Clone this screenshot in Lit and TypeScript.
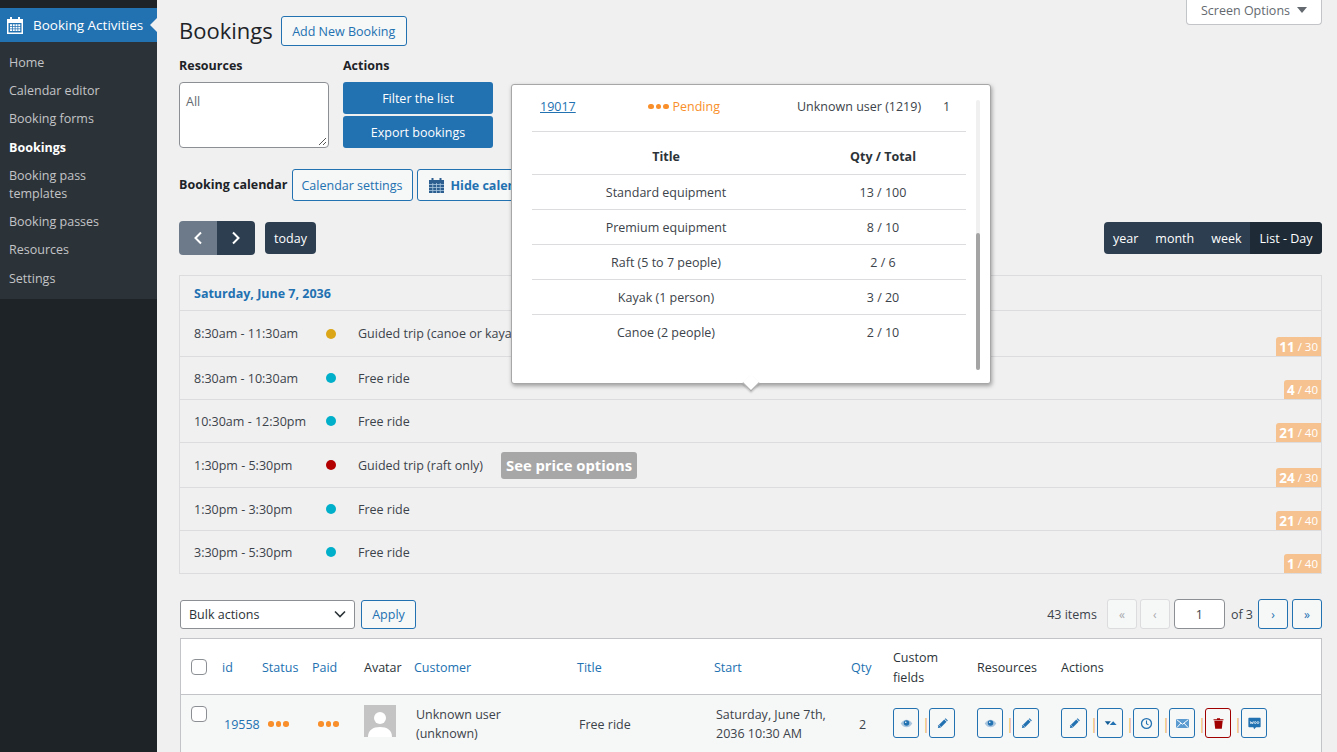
import { LitElement, html, css, svg } from "lit";
import { customElement } from "lit/decorators.js";

const MENU = ["Home", "Calendar editor", "Booking forms", "Bookings", "Booking pass templates", "Booking passes", "Resources", "Settings"];

const EVENTS = [
  { time: "8:30am - 11:30am", dot: "#dba617", title: "Guided trip (canoe or kayak)", qty: 11, total: 30, rowClass: "row-46" },
  { time: "8:30am - 10:30am", dot: "#00afc9", title: "Free ride", qty: 4, total: 40, rowClass: "" },
  { time: "10:30am - 12:30pm", dot: "#00afc9", title: "Free ride", qty: 21, total: 40, rowClass: "" },
  { time: "1:30pm - 5:30pm", dot: "#b30000", title: "Guided trip (raft only)", qty: 24, total: 30, rowClass: "row-45", tip: "See price options" },
  { time: "1:30pm - 3:30pm", dot: "#00afc9", title: "Free ride", qty: 21, total: 40, rowClass: "" },
  { time: "3:30pm - 5:30pm", dot: "#00afc9", title: "Free ride", qty: 1, total: 40, rowClass: "" },
];

const RESOURCES = [
  ["Standard equipment", "13 / 100"],
  ["Premium equipment", "8 / 10"],
  ["Raft (5 to 7 people)", "2 / 6"],
  ["Kayak (1 person)", "3 / 20"],
  ["Canoe (2 people)", "2 / 10"],
];

const CELL_X = [3, 5.75, 8.5, 11.25];
const CELL_Y = [8.25, 10.75, 13.25];

const menuCalendar = html`<svg width="16" height="18" viewBox="0 0 16 18" fill="#fff">
  <path fill-rule="evenodd" d="M0 3h3V1h2v2h6V1h2v2h3v15H0zM1.500 7v9.500h13V7z"/>
  ${CELL_Y.map((y) => CELL_X.map((x) => svg`<rect x=${x} y=${y} width="2" height="1.750"/>`))}
</svg>`;

const buttonCalendar = html`<svg width="15" height="16" viewBox="0 0 15 16">
  <path d="M0 3h2.500V1h2v2h6V1h2v2H15v13H0z" fill="#2c5f8f"/>
  <path d="M0 7.500h15M0 10.500h15M0 13.500h15M3.750 6v10M7.500 6v10M11.250 6v10" stroke="#a9c6de" stroke-width=".8"/>
</svg>`;

const ICONS: Record<string, unknown> = {
  eye: svg`<path d="M1 8.500C3 5 6 3.500 8.500 3.500S14 5 16 8.500C14 12 11 13.500 8.500 13.500S3 12 1 8.500z" fill="#a9c6de"/><circle cx="8.500" cy="8" r="3.600" fill="#2271b1"/><circle cx="7.500" cy="6.800" r="1" fill="#fff"/>`,
  pencil: svg`<path d="M2.500 14.500l.8-3.800 7.500-7.500 3 3-7.500 7.500z" fill="#2271b1"/><path d="M11.500 2.500l1-1 3 3-1 1z" fill="#2271b1"/><path d="M4 10.500l2.500 2.500" stroke="#cfe0ee" stroke-width=".8"/>`,
  arrows: svg`<path d="M1 5.500h8l-4 5z" fill="#135e96"/><path d="M12 5.500l4.500 5h-9z" fill="#2271b1"/>`,
  clock: svg`<circle cx="8.500" cy="8.500" r="6.500" fill="none" stroke="#2271b1" stroke-width="1.700"/><path d="M8.500 4.500v4.300l2.600 1.500" fill="none" stroke="#2271b1" stroke-width="1.400"/>`,
  mail: svg`<rect x="0" y="2.500" width="17" height="12" rx="1" fill="#5b9bd0"/><path d="M1 3.500l7.500 6 7.500-6M1 14l5.500-6M16 14l-5.500-6" fill="none" stroke="#fff" stroke-width="1.300"/>`,
  trash: svg`<path d="M3 5h11l-1.200 10.500H4.200z" fill="#a00000"/><path d="M2 3h13v1.300H2zM6.500 1.500h4V3h-4z" fill="#a00000"/>`,
  woo: svg`<path d="M1.500 1h14a1 1 0 0 1 1 1v10.500a1 1 0 0 1-1 1h-5L8 16l-1-2.500H1.500a1 1 0 0 1-1-1V2a1 1 0 0 1 1-1z" fill="#2271b1"/><path d="M3 5.500l.8 3.500 1.200-2.500 1.200 2.500.8-3.500" fill="none" stroke="#fff" stroke-width=".9"/><circle cx="9.500" cy="7.300" r="1.300" fill="none" stroke="#fff" stroke-width=".9"/><circle cx="13" cy="7.300" r="1.300" fill="none" stroke="#fff" stroke-width=".9"/>`,
};

const iconButton = (name: string) => html`<span class="icon-btn ${name === "trash" ? "danger" : ""}">
  <svg width="13" height="13" viewBox="0 0 17 17">${ICONS[name]}</svg>
</span>`;

const iconGroup = (names: string[]) => html`<div class="icon-group">
  ${names.map((n, i) => html`${i > 0 ? html`<span class="sep">|</span>` : ""}${iconButton(n)}`)}
</div>`;

const dots = html`<span class="dots"><i></i><i></i><i></i></span>`;

@customElement("app-root")
export class AppRoot extends LitElement {
  static styles = css`
    :host {
      display: flex;
      height: 752px;
      overflow: hidden;
      background: #f0f0f1;
      font-family: "Open Sans", "Noto Sans", sans-serif;
      font-size: 12.500px;
      color: #3c434a;
    }
    * {
      box-sizing: border-box;
    }

    /* admin menu */
    .sidebar {
      width: 157px;
      flex: none;
      background: #1d2327;
      padding-top: 8px;
    }
    .menu-head {
      position: relative;
      display: flex;
      align-items: center;
      gap: 10px;
      height: 34px;
      padding-left: 7px;
      background: #2271b1;
      color: #fff;
      font-size: 13.500px;
      white-space: nowrap;
    }
    .menu-head::after {
      content: "";
      position: absolute;
      right: 0;
      top: 10px;
      border: 7.500px solid transparent;
      border-right-color: #f0f0f1;
      border-left-width: 0;
    }
    .submenu {
      background: #2c3338;
      padding: 7px 0 6px;
    }
    .submenu div {
      padding: 5px 30px 5px 9px;
      line-height: 18.200px;
      color: #c3c4c7;
    }
    .submenu .current {
      color: #fff;
      font-weight: 700;
    }

    /* main column */
    .main {
      position: relative;
      flex: 1;
      min-width: 0;
      padding: 0 15px 0 22px;
    }
    .screen-tab {
      position: absolute;
      top: 0;
      right: 15px;
      width: 136px;
      height: 25px;
      padding-bottom: 4px;
      display: flex;
      align-items: center;
      justify-content: center;
      gap: 7px;
      background: #fff;
      border: 1px solid #c3c4c7;
      border-top: 0;
      border-radius: 0 0 4px 4px;
      color: #646970;
    }
    .caret {
      border: 5px solid transparent;
      border-top: 6px solid #646970;
      border-bottom: 0;
    }
    .title-row {
      display: flex;
      align-items: center;
      gap: 8px;
      height: 30px;
      margin-top: 16px;
    }
    h1 {
      margin: 0 0 2px;
      font-size: 22px;
      font-weight: 400;
      color: #1d2327;
    }
    .btn {
      display: inline-flex;
      align-items: center;
      justify-content: center;
      background: #f6f7f7;
      border: 1px solid #2271b1;
      border-radius: 3px;
      color: #2271b1;
      white-space: nowrap;
    }
    .add-new {
      width: 126px;
      height: 30px;
    }
    .filters {
      display: flex;
      gap: 14px;
      margin-top: 11px;
    }
    .field-label {
      display: block;
      height: 25px;
      line-height: 18px;
      font-weight: 700;
      color: #1d2327;
      font-size: 12.500px;
    }
    .res-box {
      position: relative;
      width: 150px;
      height: 66px;
      padding: 10px 6px;
      background: #fff;
      border: 1px solid #8c8f94;
      border-radius: 4px;
      color: #646970;
    }
    .grip {
      position: absolute;
      right: 1px;
      bottom: 1px;
    }
    .action-stack {
      display: flex;
      flex-direction: column;
      gap: 2px;
    }
    .primary {
      width: 150px;
      height: 32px;
      background: #2271b1;
      color: #fff;
      border-radius: 3px;
      display: flex;
      align-items: center;
      justify-content: center;
    }
    .cal-row {
      display: flex;
      align-items: center;
      gap: 4px;
      height: 32px;
      margin-top: 21px;
    }
    .cal-row .field-label {
      height: auto;
      margin-right: 0;
    }
    .cal-settings {
      width: 121px;
      height: 32px;
    }
    .hide-cal {
      width: 170px;
      height: 32px;
      gap: 7px;
      font-weight: 700;
      justify-content: flex-start;
      padding-left: 11px;
    }
    .toolbar {
      display: flex;
      align-items: center;
      justify-content: space-between;
      height: 34px;
      margin-top: 20px;
    }
    .toolbar-left {
      display: flex;
      align-items: center;
      gap: 10px;
    }
    .nav-pair {
      display: flex;
    }
    .nav-btn {
      width: 38px;
      height: 34px;
      display: flex;
      align-items: center;
      justify-content: center;
      background: #2c3e50;
      border-radius: 0 4px 4px 0;
    }
    .nav-btn.off {
      background: #6c7a89;
      border-radius: 4px 0 0 4px;
    }
    .dark {
      height: 32px;
      display: flex;
      align-items: center;
      background: #2c3e50;
      border-radius: 4px;
      color: #fff;
    }
    .today {
      width: 51px;
      justify-content: center;
    }
    .views {
      overflow: hidden;
    }
    .views span {
      height: 32px;
      padding: 0 8.500px;
      display: flex;
      align-items: center;
      justify-content: center;
    }
    .views .on {
      background: #1e2b37;
      width: 72px;
      padding: 0;
    }

    /* day list */
    .day-list {
      margin-top: 20px;
      border: 1px solid #dcdcde;
      border-bottom: 0;
    }
    .day-head {
      height: 35px;
      display: flex;
      align-items: center;
      padding-left: 14px;
      font-weight: 700;
      color: #2271b1;
      border-bottom: 1px solid #dcdcde;
    }
    .ev-row {
      display: flex;
      height: 43px;
      border-bottom: 1px solid #dcdcde;
    }
    .row-46 {
      height: 46px;
    }
    .row-45 {
      height: 45px;
    }
    .ev-main {
      flex: 1;
      display: flex;
      align-items: center;
      padding-left: 14px;
      white-space: nowrap;
    }
    .ev-time {
      width: 132px;
    }
    .ev-dot {
      width: 10px;
      height: 10px;
      border-radius: 50%;
      margin-right: 22px;
    }
    .tip {
      margin-left: 18px;
      padding: 0 5px;
      height: 27px;
      display: flex;
      align-items: center;
      background: #a7a7a7;
      border-radius: 3px;
      color: #fff;
      font-weight: 700;
      font-size: 14.800px;
    }
    .seats {
      align-self: flex-end;
      height: 19px;
      display: flex;
      align-items: center;
      gap: 3px;
      padding: 0 3px;
      border-radius: 3px 0 0 0;
      background: #f6c28f;
      color: #fff;
      font-size: 11.500px;
      white-space: nowrap;
    }
    .seats b {
      font-size: 13.500px;
    }

    /* bulk + pagination */
    .tablenav {
      display: flex;
      justify-content: space-between;
      align-items: center;
      margin-top: 25px;
      height: 30px;
    }
    .tablenav-left {
      display: flex;
      gap: 6px;
      margin-left: 1px;
    }
    .select {
      width: 175px;
      height: 29px;
      display: flex;
      align-items: center;
      justify-content: space-between;
      padding: 0 8px;
      background: #fff;
      border: 1px solid #8c8f94;
      border-radius: 3px;
      color: #2c3338;
    }
    .apply {
      width: 55px;
      height: 29px;
    }
    .pages {
      display: flex;
      align-items: center;
      gap: 4px;
    }
    .items {
      margin-right: 6px;
    }
    .pg {
      width: 30px;
      height: 30px;
      font-size: 12px;
    }
    .pg.off {
      border-color: #dcdcde;
      color: #a7aaad;
    }
    .pg.first {
      margin-right: -1px;
    }
    .pg-input {
      width: 51px;
      height: 30px;
      display: flex;
      align-items: center;
      justify-content: center;
      background: #fff;
      border: 1px solid #8c8f94;
      border-radius: 4px;
    }
    .of {
      margin: 0 1px 0 2px;
    }

    /* bookings table */
    .table {
      margin: 9px 0 0 1px;
      border: 1px solid #c3c4c7;
      background: #fff;
    }
    .grid {
      display: grid;
      grid-template-columns: 31px 40px 50px 52px 50px 163px 137px 137px 42px 84px 84px 1fr;
      padding-left: 10px;
    }
    .t-head {
      height: 56px;
      padding-top: 2px;
      align-items: center;
      line-height: 20px;
      border-bottom: 1px solid #c3c4c7;
      color: #2c3338;
    }
    .t-head .narrow {
      padding-right: 20px;
    }
    .t-head .check {
      margin-top: -2px;
    }
    .link {
      color: #2271b1;
    }
    .t-row {
      height: 70px;
      background: #f6f7f7;
      align-items: start;
      line-height: 19px;
    }
    .check {
      width: 16px;
      height: 16px;
      background: #fff;
      border: 1px solid #8c8f94;
      border-radius: 4px;
    }
    .t-row .check {
      margin-top: 11px;
    }
    .cell {
      margin-top: 20px;
      padding-left: 2px;
    }
    .cell.two {
      margin-top: 10px;
    }
    .cell.customer {
      padding-right: 50px;
    }
    .cell.qty {
      padding-left: 8px;
    }
    .dots {
      display: inline-flex;
      gap: 2px;
    }
    .dots i {
      width: 5.500px;
      height: 5.500px;
      border-radius: 50%;
      background: #f98f2a;
    }
    .dots-cell {
      margin: 26px 0 0 6px;
      line-height: 0;
    }
    .avatar {
      display: block;
      margin-top: 10px;
      background: #c4c4c4;
    }
    .icon-group {
      display: flex;
      align-items: center;
      gap: 3px;
      margin-top: 13px;
    }
    .icon-btn {
      width: 26px;
      height: 30px;
      display: flex;
      align-items: center;
      justify-content: center;
      background: #f6f7f7;
      border: 1px solid #2271b1;
      border-radius: 3px;
    }
    .icon-btn.danger {
      border-color: #a00000;
    }
    .sep {
      width: 4px;
      text-align: center;
      font-size: 15px;
      color: #f0a860;
    }

    /* booking tooltip */
    .popup {
      position: absolute;
      left: 354px;
      top: 84px;
      width: 480px;
      height: 300px;
      padding: 0 24px 0 20px;
      background: #fff;
      border: 1px solid #a7a7a7;
      border-radius: 3px;
      box-shadow: 1px 2px 4px rgba(0, 0, 0, 0.35);
    }
    .popup::before {
      content: "";
      position: absolute;
      left: 233px;
      bottom: -6px;
      width: 11px;
      height: 11px;
      background: #fff;
      border-right: 1px solid #a7a7a7;
      border-bottom: 1px solid #a7a7a7;
      transform: rotate(45deg);
      box-shadow: 1px 1px 2px rgba(0, 0, 0, 0.2);
    }
    .popup-summary {
      display: grid;
      grid-template-columns: 108px 149px 146px 1fr;
      height: 47px;
      padding: 0 0 3px 8px;
      align-items: center;
      border-bottom: 1px solid #dcdcde;
      white-space: nowrap;
    }
    .popup-summary a {
      color: #2271b1;
      text-decoration: underline;
    }
    .pending {
      color: #f98f2a;
      display: flex;
      align-items: center;
      gap: 4px;
    }
    .popup-row {
      display: grid;
      grid-template-columns: 268px 166px;
      height: 35px;
      align-items: center;
      text-align: center;
      border-bottom: 1px solid #dcdcde;
    }
    .popup-row:last-child {
      border-bottom: 0;
    }
    .popup-row.hd {
      height: 43px;
      padding-top: 6px;
      font-weight: 700;
      color: #2c3338;
    }
    .scrollbar {
      position: absolute;
      right: 10px;
      top: 15px;
      bottom: 13px;
      width: 4px;
      background: #f0f0f1;
      border-radius: 2px;
      display: flex;
      align-items: flex-end;
    }
    .scrollbar div {
      width: 100%;
      height: 137px;
      background: #a4a4a4;
      border-radius: 2px;
    }
  `;

  render() {
    return html`
      <aside class="sidebar">
        <div class="menu-head">${menuCalendar}<span>Booking Activities</span></div>
        <div class="submenu">
          ${MENU.map((m) => html`<div class=${m === "Bookings" ? "current" : ""}>${m}</div>`)}
        </div>
      </aside>

      <main class="main">
        <div class="screen-tab">Screen Options <span class="caret"></span></div>

        <div class="title-row">
          <h1>Bookings</h1>
          <span class="btn add-new">Add New Booking</span>
        </div>

        <div class="filters">
          <div>
            <label class="field-label">Resources</label>
            <div class="res-box">
              All
              <svg class="grip" width="10" height="10" viewBox="0 0 10 10"><path d="M9 2L2 9M9 6L6 9" stroke="#555" stroke-width="1"/></svg>
            </div>
          </div>
          <div>
            <label class="field-label">Actions</label>
            <div class="action-stack">
              <span class="primary">Filter the list</span>
              <span class="primary">Export bookings</span>
            </div>
          </div>
        </div>

        <div class="cal-row">
          <label class="field-label">Booking calendar</label>
          <span class="btn cal-settings">Calendar settings</span>
          <span class="btn hide-cal">${buttonCalendar}Hide calendar</span>
        </div>

        <div class="toolbar">
          <div class="toolbar-left">
            <div class="nav-pair">
              <span class="nav-btn off"><svg width="10" height="14" viewBox="0 0 10 14"><path d="M8 1.500L2.500 7 8 12.500" fill="none" stroke="#fff" stroke-width="2"/></svg></span>
              <span class="nav-btn"><svg width="10" height="14" viewBox="0 0 10 14"><path d="M2 1.500L7.500 7 2 12.500" fill="none" stroke="#fff" stroke-width="2"/></svg></span>
            </div>
            <span class="dark today">today</span>
          </div>
          <div class="dark views">
            <span>year</span><span>month</span><span>week</span><span class="on">List - Day</span>
          </div>
        </div>

        <section class="day-list">
          <div class="day-head">Saturday, June 7, 2036</div>
          ${EVENTS.map(
            (e) => html`<div class="ev-row ${e.rowClass}">
              <div class="ev-main">
                <span class="ev-time">${e.time}</span>
                <span class="ev-dot" style="background:${e.dot}"></span>
                <span>${e.title}</span>
                ${e.tip ? html`<span class="tip">${e.tip}</span>` : ""}
              </div>
              <div class="seats"><b>${e.qty}</b><span>/ ${e.total}</span></div>
            </div>`
          )}
        </section>

        <div class="tablenav">
          <div class="tablenav-left">
            <div class="select">
              Bulk actions
              <svg width="12" height="8" viewBox="0 0 12 8"><path d="M1 1.500l5 5 5-5" fill="none" stroke="#2c3338" stroke-width="1.600"/></svg>
            </div>
            <span class="btn apply">Apply</span>
          </div>
          <div class="pages">
            <span class="items">43 items</span>
            <span class="btn pg off first">«</span>
            <span class="btn pg off">‹</span>
            <span class="pg-input">1</span>
            <span class="of">of 3</span>
            <span class="btn pg">›</span>
            <span class="btn pg">»</span>
          </div>
        </div>

        <section class="table">
          <div class="grid t-head">
            <span class="check"></span>
            <span class="link">id</span>
            <span class="link">Status</span>
            <span class="link">Paid</span>
            <span>Avatar</span>
            <span class="link">Customer</span>
            <span class="link">Title</span>
            <span class="link">Start</span>
            <span class="link">Qty</span>
            <span class="narrow">Custom fields</span>
            <span>Resources</span>
            <span>Actions</span>
          </div>
          <div class="grid t-row">
            <span class="check"></span>
            <span class="cell link">19558</span>
            <span class="dots-cell">${dots}</span>
            <span class="dots-cell">${dots}</span>
            <svg class="avatar" width="32" height="32" viewBox="0 0 32 32">
              <circle cx="16" cy="13" r="6" fill="#fff"/>
              <path d="M4 32c0-7 5-10 12-10s12 3 12 10z" fill="#fff"/>
            </svg>
            <span class="cell two customer">Unknown user (unknown)</span>
            <span class="cell">Free ride</span>
            <span class="cell two">Saturday, June 7th, 2036 10:30 AM</span>
            <span class="cell qty">2</span>
            ${iconGroup(["eye", "pencil"])}
            ${iconGroup(["eye", "pencil"])}
            ${iconGroup(["pencil", "arrows", "clock", "mail", "trash", "woo"])}
          </div>
        </section>

        <div class="popup">
          <div class="popup-summary">
            <a>19017</a>
            <span class="pending">${dots} Pending</span>
            <span>Unknown user (1219)</span>
            <span>1</span>
          </div>
          <div>
            <div class="popup-row hd"><span>Title</span><span>Qty / Total</span></div>
            ${RESOURCES.map((r) => html`<div class="popup-row"><span>${r[0]}</span><span>${r[1]}</span></div>`)}
          </div>
          <div class="scrollbar"><div></div></div>
        </div>
      </main>
    `;
  }
}
